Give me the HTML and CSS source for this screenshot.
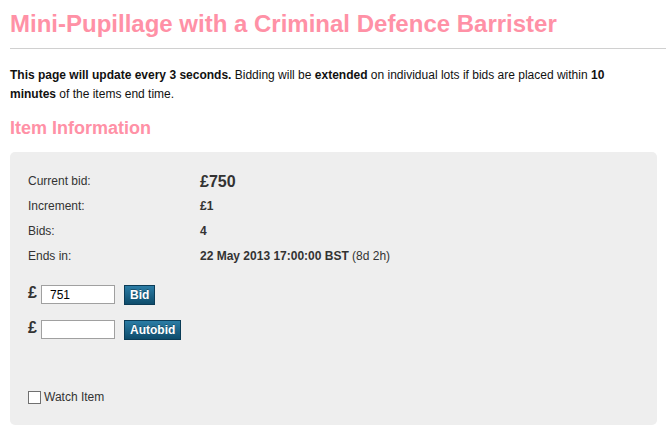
FILE: index.html
```html
<!DOCTYPE html>
<html>
<head>
<meta charset="utf-8">
<link rel="stylesheet" href="styles.css">
</head>
<body>
<div class="page">
  <h1 class="title">Mini-Pupillage with a Criminal Defence Barrister</h1>
  <hr class="rule">
  <p class="notice"><b>This page will update every 3 seconds.</b> Bidding will be <b>extended</b> on individual lots if bids are placed within <b>10 minutes</b> of the items end time.</p>
  <h2 class="subtitle">Item Information</h2>
  <div class="panel">
    <div class="info">
      <div class="label">Current bid:</div><div class="value big">£750</div>
      <div class="label">Increment:</div><div class="value">£1</div>
      <div class="label">Bids:</div><div class="value">4</div>
      <div class="label">Ends in:</div><div class="value">22 May 2013 17:00:00 BST <span class="normal">(8d 2h)</span></div>
    </div>
    <div class="bidform">
      <div class="bidrow"><span class="pound">£</span><input class="amount" type="text" value="751"><button class="btn">Bid</button></div>
      <div class="bidrow"><span class="pound">£</span><input class="amount" type="text" value=""><button class="btn">Autobid</button></div>
    </div>
    <label class="watch"><input type="checkbox" class="check"><span>Watch Item</span></label>
  </div>
</div>
</body>
</html>
```
FILE: styles.css
```css
html, body { margin: 0; padding: 0; background: #fff; }
body { font-family: "Liberation Sans", Arial, sans-serif; font-size: 12px; color: #000; }
.page { padding: 0 0 0 10px; }
.title { margin: 0; padding-top: 10px; font-size: 24px; line-height: 28px; font-weight: bold; color: #ff91a6; }
.rule { border: 0; border-top: 1px solid #d0d0d0; margin: 10px 0 0 0; height: 0; }
.notice { margin: 17px 45px 0 0; line-height: 19px; color: #111; }
.subtitle { margin: 13px 0 0 0; font-size: 18px; line-height: 22px; color: #ff91a6; font-weight: bold; }
.panel { margin: 13px 9px 14px 0; background: #eeeeee; border-radius: 5px; padding: 17px 18px 21px 18px; height: 235px; display: flex; flex-direction: column; }
.info { display: grid; grid-template-columns: 172px 1fr; row-gap: 0; color: #333; }
.label { line-height: 25px; height: 25px; }
.value { line-height: 25px; height: 25px; font-weight: bold; color: #333; }
.value.big { font-size: 16px; }
.normal { font-weight: normal; }
.bidform { margin-top: 16px; display: flex; flex-direction: column; gap: 15px; }
.bidrow { display: flex; align-items: flex-start; height: 20px; }
.pound { font-size: 16px; font-weight: bold; color: #333; line-height: 16px; width: 13px; }
.amount { box-sizing: border-box; width: 74px; height: 19px; margin: 0; padding: 1px 8px; border: 1px solid #a0a0a0; background: #fff; font-family: "Liberation Sans", Arial, sans-serif; font-size: 12px; color: #000; outline: none; }
.btn { margin: 0 0 0 9px; height: 20px; padding: 0 5px; border: 1px solid #0b3c57; background: linear-gradient(#2b7ca5, #0e4c6b); color: #fff; font-family: "Liberation Sans", Arial, sans-serif; font-weight: bold; font-size: 12px; line-height: 18px; text-shadow: 0 -1px 0 rgba(0,0,0,0.3); }
.watch { margin-top: auto; display: flex; align-items: center; color: #333; font-size: 12px; }
.check { appearance: none; -webkit-appearance: none; margin: 0 3px 0 0; width: 13px; height: 13px; border: 1px solid #707070; background: #fff; box-sizing: border-box; }
```
